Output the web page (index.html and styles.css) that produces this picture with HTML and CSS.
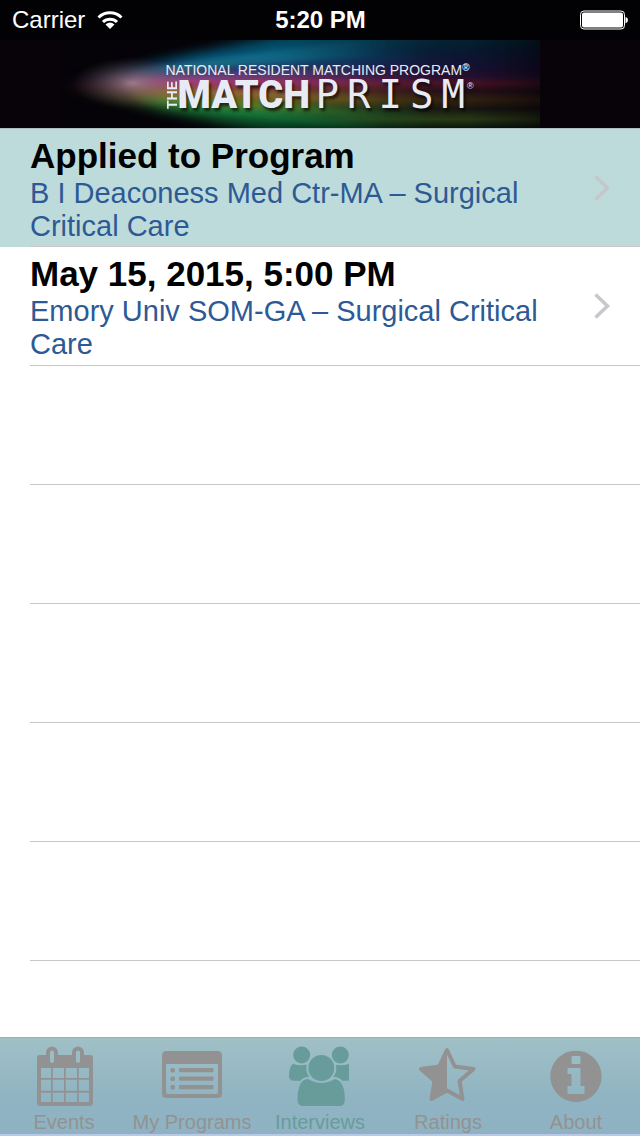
FILE: index.html
```html
<!DOCTYPE html>
<html lang="en">
<head>
<meta charset="utf-8">
<meta name="viewport" content="width=device-width, initial-scale=1">
<title>The Match Prism – Interviews</title>
<link rel="stylesheet" href="styles.css">
</head>
<body>
<div class="app">
  <div class="status">
    <div class="carrier"><span>Carrier</span>
      <svg class="wifi" viewBox="0 0 26 20" width="26" height="20" aria-hidden="true"><g fill="none" stroke="#fff" stroke-width="3"><path d="M1.500 7.500A16.500 16.500 0 0 1 24.500 7.500"/><path d="M6 12A10 10 0 0 1 20 12"/></g><path fill="#fff" d="M8.500 14.500Q13 10.500 17.500 14.500L13 19Z"/></svg>
    </div>
    <time class="clock">5:20 PM</time>
    <svg class="battery" viewBox="0 0 50 20" width="50" height="20" role="img" aria-label="Battery full"><rect x="1.500" y="1" width="44" height="18" rx="3.500" fill="none" stroke="#fff" stroke-width="1"/><rect x="3" y="2.500" width="41" height="15" rx="2" fill="#fff"/><path d="M46.500 7Q49 7.500 49 10T46.500 13.500Z" fill="#fff"/></svg>
  </div>
  <header class="banner">
    <svg class="beam" viewBox="0 0 480 88" preserveAspectRatio="none" aria-hidden="true">
      <defs>
        <linearGradient id="spectrum" x1="0" y1="0" x2="0" y2="1">
          <stop offset="0" stop-color="#045068"/><stop offset=".2" stop-color="#075a80"/><stop offset=".34" stop-color="#2a3568"/><stop offset=".46" stop-color="#7d2a60"/><stop offset=".56" stop-color="#7d3a30"/><stop offset=".68" stop-color="#66601a"/><stop offset=".82" stop-color="#1c6c33"/><stop offset="1" stop-color="#023f22"/>
        </linearGradient>
        <linearGradient id="spectrumFar" x1="0" y1="0" x2="0" y2="1">
          <stop offset="0" stop-color="#05222f"/><stop offset=".14" stop-color="#0b1530"/><stop offset=".32" stop-color="#190f33"/><stop offset=".42" stop-color="#251030"/><stop offset=".49" stop-color="#4a1225"/><stop offset=".58" stop-color="#200d18"/><stop offset=".68" stop-color="#352010"/><stop offset=".78" stop-color="#17100f"/><stop offset=".9" stop-color="#2f3d14"/><stop offset="1" stop-color="#0c150c"/>
        </linearGradient>
        <linearGradient id="fade"><stop offset="0" stop-color="#fff" stop-opacity="0"/><stop offset=".12" stop-color="#fff" stop-opacity=".3"/><stop offset=".22" stop-color="#fff" stop-opacity=".95"/><stop offset=".45" stop-color="#fff" stop-opacity=".95"/><stop offset=".75" stop-color="#fff" stop-opacity=".1"/><stop offset="1" stop-color="#fff" stop-opacity="0"/></linearGradient>
        <linearGradient id="fadeFar"><stop offset=".3" stop-color="#fff" stop-opacity="0"/><stop offset=".6" stop-color="#fff"/><stop offset=".85" stop-color="#fff" stop-opacity=".9"/><stop offset="1" stop-color="#fff" stop-opacity=".4"/></linearGradient>
        <linearGradient id="rayFade" gradientUnits="userSpaceOnUse" x1="60" y1="0" x2="330" y2="0"><stop offset="0" stop-color="#fff" stop-opacity="0"/><stop offset=".22" stop-color="#fff"/><stop offset="1" stop-color="#fff" stop-opacity="0"/></linearGradient>
        <radialGradient id="glow"><stop offset="0" stop-color="#c6b4be" stop-opacity=".6"/><stop offset=".5" stop-color="#94808c" stop-opacity=".32"/><stop offset="1" stop-color="#665560" stop-opacity="0"/></radialGradient>
        <filter id="soft" x="-20%" y="-30%" width="140%" height="160%"><feGaussianBlur stdDeviation="6"/></filter>
        <filter id="streak" x="-20%" y="-50%" width="140%" height="200%"><feGaussianBlur stdDeviation="4 2.500"/></filter>
        <mask id="cone"><path d="M-10 46C50 34 90 22 170 6L300-20H500V105H260C170 86 90 68-10 46Z" fill="url(#fade)" filter="url(#soft)"/></mask>
        <mask id="far"><rect width="480" height="88" fill="url(#fadeFar)"/></mask>
        <mask id="rays"><rect width="480" height="88" fill="url(#rayFade)"/></mask>
      </defs>
      <rect width="480" height="88" fill="#050308"/>
      <rect width="480" height="88" fill="url(#spectrumFar)" mask="url(#far)"/>
      <rect width="480" height="88" fill="url(#spectrum)" mask="url(#cone)"/>
      <g mask="url(#rays)"><g filter="url(#streak)">
        <path d="M70 30L330-4V14L70 36Z" fill="#1f8f9c" opacity=".55"/>
        <path d="M70 36L330 26V34L70 41Z" fill="#7a62a8" opacity=".55"/>
        <path d="M60 40L330 39V46L60 46Z" fill="#d0508e" opacity=".6"/>
        <path d="M60 46L330 54V64L60 52Z" fill="#c8a24a" opacity=".5"/>
        <path d="M70 52L330 72V80L70 58Z" fill="#6fa52c" opacity=".6"/>
        <path d="M80 57L330 84V94L80 63Z" fill="#109048" opacity=".6"/>
      </g></g>
      <ellipse cx="72" cy="43" rx="60" ry="26" fill="url(#glow)"/>
    </svg>
    <h1 class="logo">
      <span class="tagline">NATIONAL RESIDENT MATCHING PROGRAM<span class="reg">®</span></span>
      <span class="wordmark"><span class="the">THE</span><span class="match">MATCH</span><span class="prism">PRISM</span><span class="mark">®</span></span>
    </h1>
  </header>
  <main class="content">
    <ul class="list">
      <li class="row selected"><a class="entry" href="#applied"><span class="text"><strong class="title">Applied to Program</strong><span class="detail">B I Deaconess Med Ctr-MA – Surgical Critical Care</span></span><svg class="chevron" viewBox="0 0 16 26" width="16" height="26" aria-hidden="true"><path d="M1.500 1.500L13.500 13L1.500 24.500"/></svg></a></li>
      <li class="row"><a class="entry" href="#may15"><span class="text"><strong class="title">May 15, 2015, 5:00 PM</strong><span class="detail">Emory Univ SOM-GA – Surgical Critical Care</span></span><svg class="chevron" viewBox="0 0 16 26" width="16" height="26" aria-hidden="true"><path d="M1.500 1.500L13.500 13L1.500 24.500"/></svg></a></li>
      <li class="row"></li><li class="row"></li><li class="row"></li><li class="row"></li><li class="row"></li>
    </ul>
  </main>
  <nav class="tabs" aria-label="Main">
    <a class="tab" href="#events">
      <svg class="icon" viewBox="0 0 64 64" aria-hidden="true"><path fill="currentColor" fill-rule="evenodd" d="M8 10H14V7.500A6 6 0 0 1 26 7.500V10H40V7.500A6 6 0 0 1 52 7.500V10H58Q61 10 61 13V58Q61 61 58 61H8Q5 61 5 58V13Q5 10 8 10ZM18 7.500V16A2 2 0 0 0 22 16V7.500A2 2 0 0 0 18 7.500ZM44 7.500V16A2 2 0 0 0 48 16V7.500A2 2 0 0 0 44 7.500ZM9 23V33H19V23ZM20.700 23V33H32V23ZM33.700 23V33H45V23ZM46.700 23V33H57V23ZM9 34.700V45.700H19V34.700ZM20.700 34.700V45.700H32V34.700ZM33.700 34.700V45.700H45V34.700ZM46.700 34.700V45.700H57V34.700ZM9 47.700V57H19V47.700ZM20.700 47.700V57H32V47.700ZM33.700 47.700V57H45V47.700ZM46.700 47.700V57H57V47.700Z"/></svg>
      <span>Events</span></a>
    <a class="tab" href="#programs">
      <svg class="icon" viewBox="0 0 64 64" aria-hidden="true"><path fill="currentColor" fill-rule="evenodd" d="M6.500 6H57.500Q62 6 62 10.500V48.500Q62 53 57.500 53H6.500Q2 53 2 48.500V10.500Q2 6 6.500 6ZM6 19V47.500Q6 49 7.500 49H56.500Q58 49 58 47.500V19Z"/><g fill="currentColor"><rect x="10.500" y="23" width="4.500" height="4.500" rx="1.500"/><rect x="19" y="23" width="34.500" height="4.200" rx="1"/><rect x="10.500" y="31.500" width="4.500" height="4.500" rx="1.500"/><rect x="19" y="31.500" width="34.500" height="4.200" rx="1"/><rect x="10.500" y="40" width="4.500" height="4.500" rx="1.500"/><rect x="19" y="40" width="34.500" height="4.200" rx="1"/></g></svg>
      <span>My Programs</span></a>
    <a class="tab active" href="#interviews" aria-current="page">
      <svg class="icon" viewBox="0 0 64 64" aria-hidden="true"><defs><mask id="gap"><rect width="64" height="64" fill="#fff"/><circle cx="33.300" cy="23" r="15" fill="#000"/><path d="M8 64V47Q10 34 18 32H48Q57 34 58.500 47V64Z" fill="#000"/></mask></defs><g fill="currentColor"><circle cx="13.700" cy="10" r="8.500"/><circle cx="52.300" cy="10" r="8.500"/><path mask="url(#gap)" d="M5 18.700Q13 22 21 18.700H45Q53 22 61 18.700V35.700H5Q1 35 1 31Q1 22 5 18.700Z"/><circle cx="33.300" cy="23" r="13"/><path d="M20 34Q33 42 47 34Q53 35 55.500 43Q57.500 52 56.500 57Q56 61 51 61H15Q10 61 9.500 55Q9 48 11.500 41Q14 34 20 34Z"/></g></svg>
      <span>Interviews</span></a>
    <a class="tab" href="#ratings">
      <svg class="icon" viewBox="0 0 64 64" aria-hidden="true"><path d="M31 5L38.800 21.500L57.500 24L43.500 36L46.500 54L31 45.500L15.500 54L18.500 36L5 24L23.200 21.500Z" fill="none" stroke="currentColor" stroke-width="4" stroke-linejoin="round"/><path d="M31 5V45.500L15.500 54L18.500 36L5 24L23.200 21.500Z" fill="currentColor"/></svg>
      <span>Ratings</span></a>
    <a class="tab" href="#about">
      <svg class="icon" viewBox="0 0 64 64" aria-hidden="true"><path fill="currentColor" fill-rule="evenodd" d="M32 5.700A25.600 25.600 0 1 1 31.900 5.700ZM28.500 11Q27.500 11 27.500 12V18Q27.500 19 28.500 19H35.500Q36.500 19 36.500 18V12Q36.500 11 35.500 11ZM23.500 23V29H27.500V41H23.500V49H40.500V41H36.500V23Z"/></svg>
      <span>About</span></a>
  </nav>
</div>
</body>
</html>
```
FILE: styles.css
```css
* { box-sizing: border-box; }
body { margin: 0; background: #fff; font-family: "Liberation Sans", Arial, sans-serif; }
.app { display: flex; flex-direction: column; min-height: 100vh; }

.status { display: grid; grid-template-columns: 1fr auto 1fr; align-items: center; height: 40px; padding: 0 11px 0 12px; background: #020205; color: #fff; font-size: 24px; }
.carrier { display: flex; align-items: center; gap: 12px; }
.clock { font-weight: bold; }
.battery { justify-self: end; }

.banner { position: relative; display: flex; justify-content: center; padding: 20px 0 0; height: 88px; background: #070309; }
.beam { position: absolute; top: 0; left: 50%; width: 480px; height: 88px; margin-left: -260px; }
.logo { position: relative; width: 309px; margin: 0; color: #e8ebf5; font-weight: normal; }
.tagline { display: flex; font-size: 14px; line-height: 20px; white-space: nowrap; }
.reg { font-size: 10px; line-height: 16px; font-weight: bold; }
.wordmark { display: flex; height: 30px; line-height: 30px; text-shadow: 2px 3px 3px #000a; }
.the { writing-mode: vertical-rl; transform: rotate(180deg); width: 12px; height: 30px; font-size: 14px; line-height: 12px; font-weight: bold; text-align: center; text-shadow: none; }
.match { width: 138px; font-family: Roboto, "Liberation Sans", sans-serif; font-weight: 900; font-size: 38px; }
.prism { font-family: "DejaVu Sans Mono", monospace; font-size: 39px; letter-spacing: 8px; }
.mark { font-size: 9px; line-height: 12px; margin-left: -6px; }

.content { flex: 1; }
.list { list-style: none; margin: 0; padding: 0; border-top: 1px solid #aebfc1; }
.row { position: relative; min-height: 119px; }
.row:first-child { min-height: 118px; }
.row::after { content: ""; position: absolute; left: 30px; right: 0; bottom: 0; height: 1px; background: #c8c7cc; }
.selected { background: #bddbdb; }
.entry { display: flex; align-items: center; justify-content: space-between; min-height: 118px; padding: 0 30px; color: #2d5a94; text-decoration: none; }
.text { flex: 0 1 520px; }
.title { display: block; color: #000; font-size: 35px; line-height: 43px; }
.detail { display: block; font-size: 29px; line-height: 33px; }
.chevron { fill: none; stroke: #c7c7cc; stroke-width: 3.5; }
.selected .chevron { stroke: #c8c5cb; }

.tabs { display: grid; grid-template-columns: repeat(5, 1fr); height: 99px; padding-top: 7px; background: linear-gradient(#a0c0c6, #90b4c2 60%, #8fb2c2); border-top: 1px solid #a4adb5; border-bottom: 2px solid #b8c8e8; }
.tab { display: flex; flex-direction: column; align-items: center; color: #929292; font-size: 20px; line-height: 24px; text-decoration: none; white-space: nowrap; }
.icon { width: 64px; height: 64px; margin-bottom: 1px; }
.active { color: #679c9b; }
```
